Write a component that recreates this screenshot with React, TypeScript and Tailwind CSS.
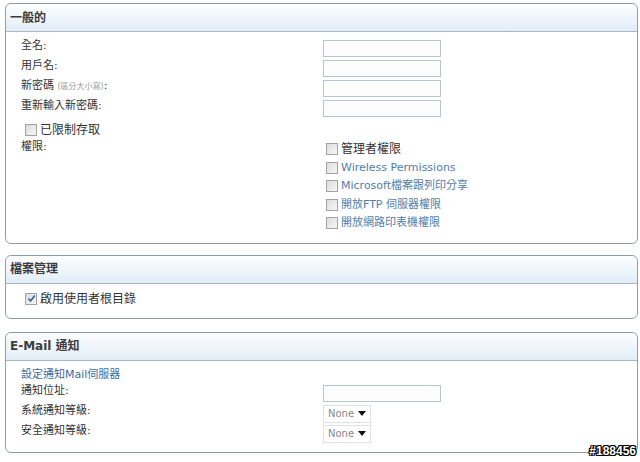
import React from "react";

const font = "font-['DejaVu_Sans','Noto_Sans_CJK_TC',sans-serif]";

function Panel({ title, children }: { title: React.ReactNode; children: React.ReactNode }) {
  return (
    <section className="rounded-[6px] border border-[#8e9dac] bg-white">
      <div className="flex h-[28px] items-center rounded-t-[6px] border-b border-[#a9b8c6] bg-gradient-to-b from-[#fdfeff] to-[#e2edf8] pl-[4px] text-[12px] font-bold text-[#3c3c3c]">
        {title}
      </div>
      {children}
    </section>
  );
}

function Box({ checked = false }: { checked?: boolean }) {
  return (
    <span className="flex h-[12px] w-[12px] shrink-0 items-center justify-center border border-[#a3a3a3] bg-gradient-to-br from-[#dcdcdc] to-[#f7f7f7]">
      {checked && (
        <svg width="9" height="9" viewBox="0 0 9 9">
          <path d="M1.5 4.5 L3.6 7 L7.8 1.5" fill="none" stroke="#2f5f9a" strokeWidth="1.6" />
        </svg>
      )}
    </span>
  );
}

function TextInput() {
  return <div className="h-[17px] w-[118px] border border-[#bac6ce] bg-[#fdfdfd]" />;
}

function Select() {
  return (
    <div className="flex h-[18px] w-[48px] items-center justify-between border border-[#e0e0e0] bg-white pl-[4px] pr-[4px] text-[10px] text-[#888]">
      <span>None</span>
      <svg width="8" height="5" viewBox="0 0 8 5">
        <path d="M0 0 H8 L4 5 Z" fill="#111" />
      </svg>
    </div>
  );
}

function Row({ label, children }: { label: React.ReactNode; children?: React.ReactNode }) {
  return (
    <div className="grid h-[20px] grid-cols-[302px_1fr] items-start">
      <div className="leading-[14px]">{label}</div>
      <div className="pt-px">{children}</div>
    </div>
  );
}

const perms = [
  { text: "管理者權限", blue: false },
  { text: "Wireless Permissions", blue: true },
  { text: "Microsoft檔案跟列印分享", blue: true },
  { text: "開放FTP 伺服器權限", blue: true },
  { text: "開放網路印表機權限", blue: true },
];

export default function App() {
  return (
    <div className={`relative h-[462px] w-[640px] bg-white pt-[3px] pl-[5px] pr-[2px] text-[11px] text-[#333] ${font}`}>
      <div className="flex flex-col">
        <Panel title="一般的">
          <div className="pl-[15px] pt-[7px] pb-[10px]">
            <Row label="全名:">
              <TextInput />
            </Row>
            <Row label="用戶名:">
              <TextInput />
            </Row>
            <Row
              label={
                <>
                  新密碼 <span className="text-[8px] text-[#999]">(區分大小寫)</span>:
                </>
              }
            >
              <TextInput />
            </Row>
            <Row label="重新輸入新密碼:">
              <TextInput />
            </Row>
            <div className="mt-[2px] flex h-[18px] items-center gap-[3px] pl-[4px] text-[12px]">
              <Box />
              <span>已限制存取</span>
            </div>
            <div className="grid grid-cols-[305px_1fr] pt-[1px]">
              <div className="leading-[14px]">權限:</div>
              <div className="flex flex-col">
                {perms.map((p) => (
                  <div key={p.text} className="flex h-[18.5px] items-center gap-[3px]">
                    <Box />
                    <span className={p.blue ? "text-[#4f7eab]" : "text-[12px] text-[#333]"}>{p.text}</span>
                  </div>
                ))}
              </div>
            </div>
          </div>
        </Panel>

        <div className="mt-[11px]">
          <Panel title="檔案管理">
            <div className="flex h-[34px] items-start gap-[3px] pl-[19px] pt-[9px] text-[12px]">
              <Box checked />
              <span className="leading-[12px]">啟用使用者根目錄</span>
            </div>
          </Panel>
        </div>

        <div className="mt-[13px]">
          <Panel title="E-Mail 通知">
            <div className="pl-[15px] pt-[6px] pb-[8px]">
              <div className="h-[17px] leading-[16px] text-[#3d6c9c]">設定通知Mail伺服器</div>
              <Row label="通知位址:">
                <TextInput />
              </Row>
              <Row label="系統通知等級:">
                <Select />
              </Row>
              <Row label="安全通知等級:">
                <Select />
              </Row>
            </div>
          </Panel>
        </div>
      </div>
      <div className="absolute right-[4px] bottom-[2px] font-['Liberation_Sans',sans-serif] text-[12px] font-bold text-white [text-shadow:1px_0_#000,-1px_0_#000,0_1px_#000,0_-1px_#000,1px_1px_#000,-1px_-1px_#000,1px_-1px_#000,-1px_1px_#000]">
        #188456
      </div>
    </div>
  );
}
